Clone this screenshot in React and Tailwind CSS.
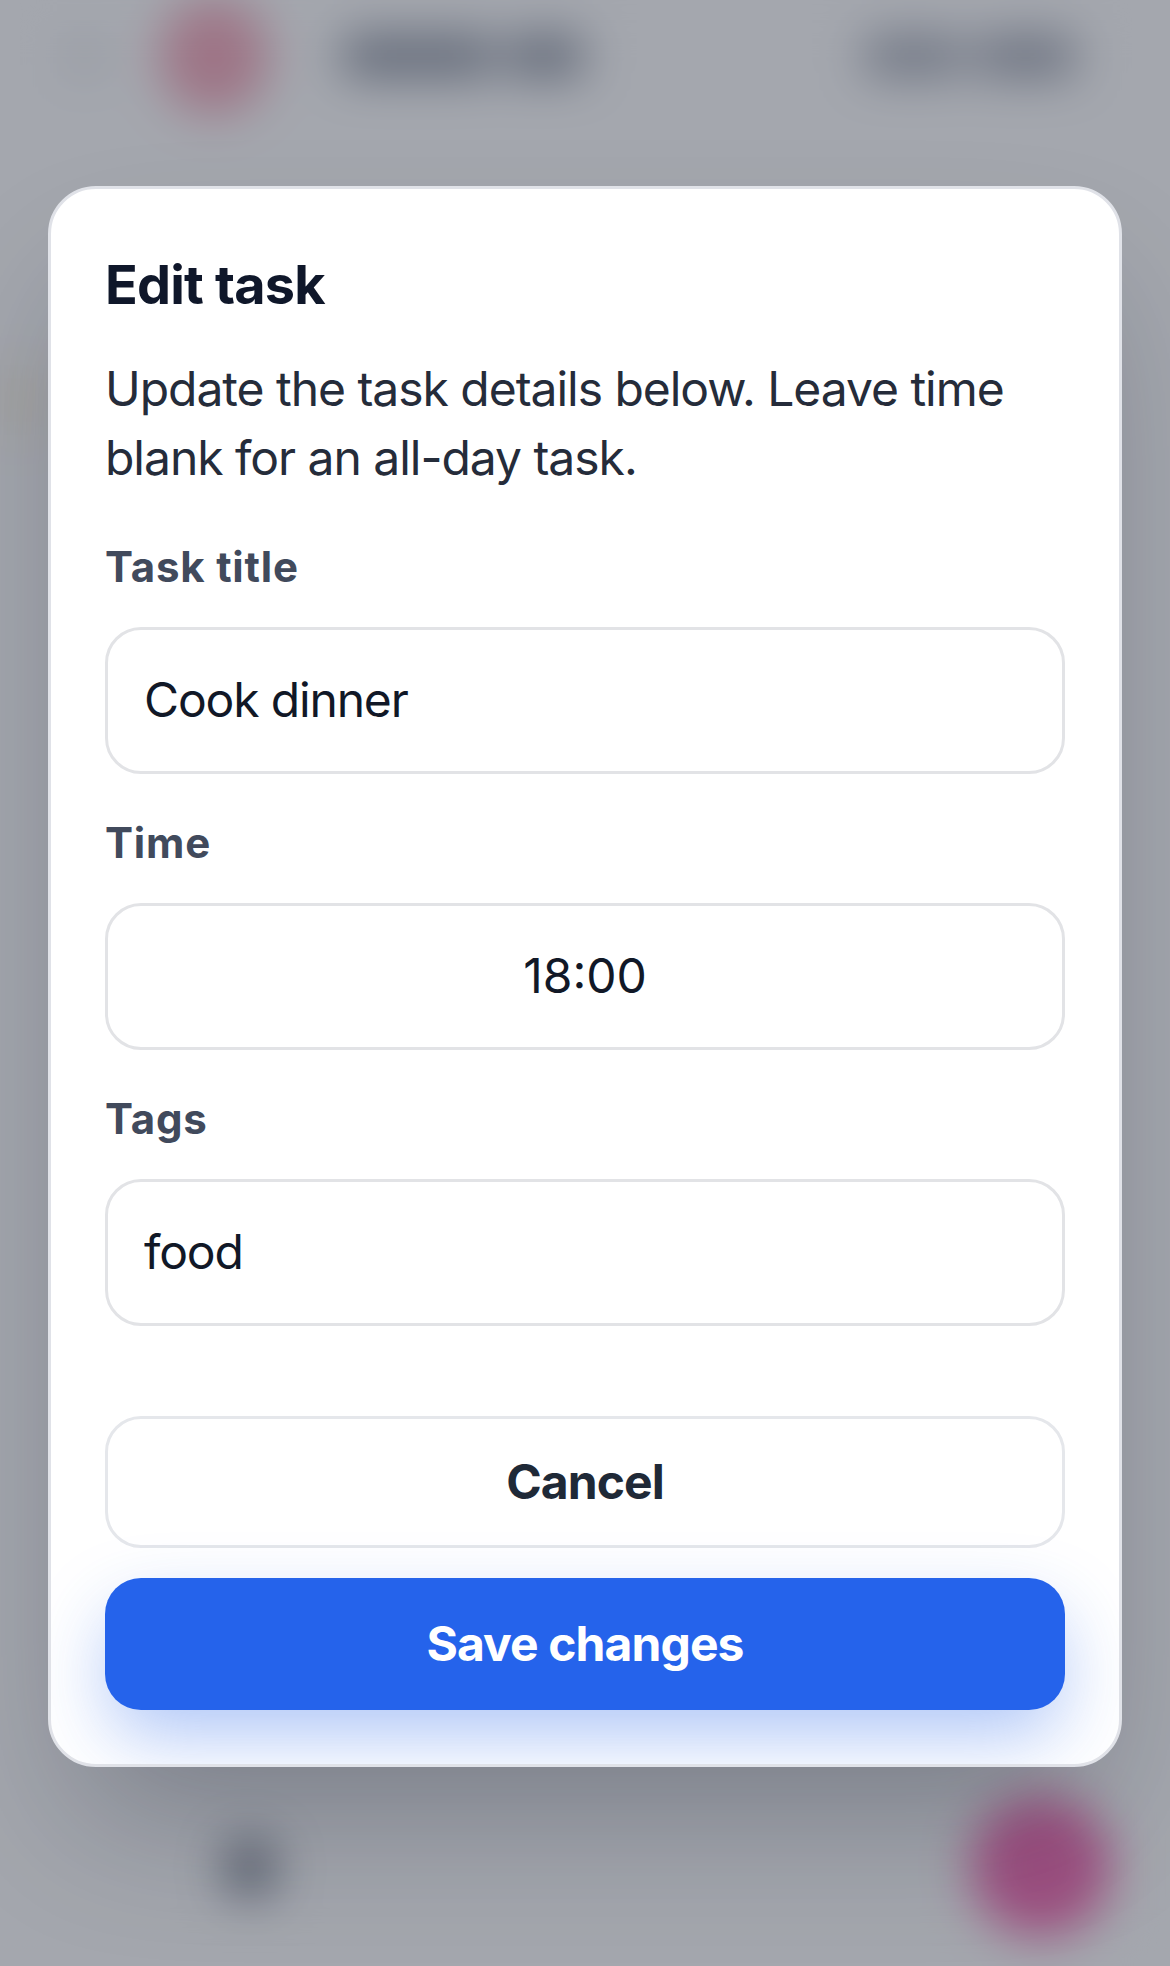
const inter = { fontFamily: 'Inter, "Liberation Sans", sans-serif' };

function Backdrop() {
  return (
    <div className="absolute inset-0 overflow-hidden bg-white blur-[24px]">
      <div className="flex h-[112px] items-center pl-[70px] pr-[95px]">
        <div className="h-[34px] w-[30px] rounded-md bg-[#e0e2e6]" />
        <div className="ml-[60px] h-[116px] w-[108px] rounded-full bg-[#f5aebf]" />
        <div className="ml-[75px] flex h-[40px] w-[240px] gap-[14px]">
          <div className="h-full flex-1 rounded-md bg-[#8f96a3]" />
          <div className="h-full w-[76px] rounded-md bg-[#8f96a3]" />
        </div>
        <div className="ml-auto flex h-[40px] w-[210px] gap-[14px]">
          <div className="h-full flex-1 rounded-md bg-[#a8adb8]" />
          <div className="h-full flex-1 rounded-md bg-[#a0a5b1]" />
        </div>
      </div>
      <div className="absolute left-[-10px] top-[365px] h-[70px] w-[50px] rounded-lg bg-[#fef6e4]" />
      <div className="absolute bottom-[68px] left-[224px] h-[60px] w-[52px] rounded-full bg-[#868c98]" />
      <div className="absolute bottom-[30px] left-[971px] h-[140px] w-[140px] rounded-full bg-[#f472b6]" />
    </div>
  );
}

function Field({ label, value, center }) {
  return (
    <div className="mb-[39px]">
      <label className="mb-[30px] block text-[42px] font-bold leading-[60px] tracking-[0.8px] text-[#414a5c]">{label}</label>
      <input
        readOnly
        value={value}
        className={`block h-[147px] w-full rounded-[36px] border-[3px] border-[#e2e3e6] bg-white px-[36px] pb-[2px] text-[48px] text-[#111827] outline-none ${center ? 'text-center' : 'tracking-[-1.15px]'}`}
      />
    </div>
  );
}

export default function App() {
  return (
    <div className="relative h-[1966px] w-[1170px] overflow-hidden" style={inter}>
      <Backdrop />
      <div className="absolute inset-0 flex items-start justify-center bg-[#0f172a]/[0.38] pt-[186px]">
        <div className="h-[1581px] w-[1074px] overflow-hidden rounded-[48px] border-[3px] border-[#e0e2e8] bg-white p-[54px] shadow-[0_75px_150px_-36px_rgba(15,23,42,0.3)]">
          <h2 className="text-[54px] font-bold leading-[83px] tracking-[-0.8px] text-[#0f172a]">Edit task</h2>
          <p className="mt-[28px] text-[48px] leading-[69px] tracking-[-1.03px] text-[#252c3a]">Update the task details below. Leave time blank for an all-day task.</p>
          <div className="mt-[45px]">
            <Field label="Task title" value="Cook dinner" />
            <Field label="Time" value="18:00" center />
            <Field label="Tags" value="food" />
          </div>
          <div className="mt-[90px] flex flex-col gap-[30px]">
            <button className="h-[132px] w-full rounded-[36px] border-[3px] border-[#e5e7eb] bg-white text-[48px] font-bold tracking-[-0.9px] text-[#1f2937]">Cancel</button>
            <button className="h-[132px] w-full rounded-[36px] bg-[#2563eb] text-[48px] font-bold tracking-[-0.9px] text-white shadow-[0_30px_75px_-6px_rgba(37,99,235,0.38)]">Save changes</button>
          </div>
        </div>
      </div>
    </div>
  );
}
